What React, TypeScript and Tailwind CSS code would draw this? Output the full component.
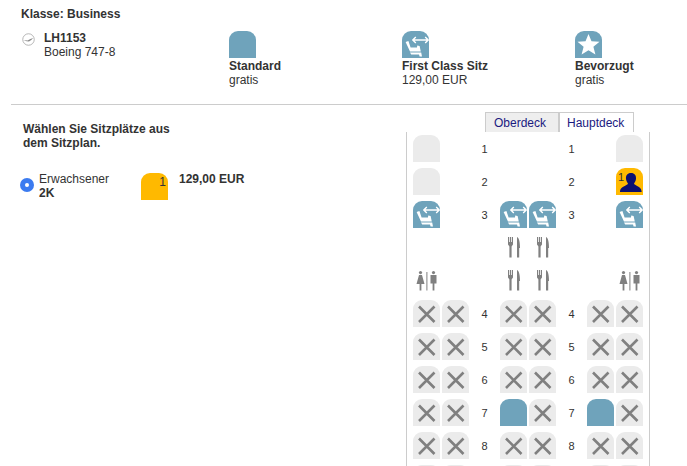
import React from "react";

type Kind = "std" | "first" | "pref" | "blocked" | "free" | "sel" | "none" | "meal" | "lav";

const firstPaths = (
  <>
    <path d="M3.6 11 L6.4 10 L8.6 16.4 L15 16.6 L15.2 14.6 L17.6 15 L18.8 20.4 L8 20.4 Z" fill="#fff" />
    <path d="M8 21.6 H19.2 L20 25.4 H17.6 L17 23.4 H9.2 Z" fill="#fff" />
    <path d="M11 9 H26 M13.8 6 L10.8 9 L13.8 12 M23.2 6 L26.2 9 L23.2 12" fill="none" stroke="#fff" strokeWidth="1.4" />
  </>
);

function Seat({ kind, label }: { kind: Kind; label?: string }) {
  if (kind === "none") return <div className="h-[27px] w-[27px]" />;
  if (kind === "meal") {
    return (
      <div className="flex h-[27px] w-[27px] items-center justify-center">
        <svg width="12" height="21" viewBox="0 0 12 21" fill="#808080">
          <path d="M0 0 H1.2 V5 H2 V0 H3 V5 H3.8 V0 H5 V7.5 L3.6 9.5 V20.5 H1.4 V9.5 L0 7.5 Z" />
          <path d="M9 0 C11.2 1 12 5 12 11 H11.2 V20.5 H9 Z" />
        </svg>
      </div>
    );
  }
  if (kind === "lav") {
    return (
      <div className="flex h-[27px] w-[27px] items-center justify-center">
        <svg width="22" height="20" viewBox="0 0 22 20" fill="#808080">
          <circle cx="4.5" cy="1.6" r="1.6" />
          <path d="M3 4 H6 L8.5 13 H5.4 V19.5 H3.6 V13 H0.5 Z" />
          <rect x="10.4" y="1" width="1" height="18.5" />
          <circle cx="17.5" cy="1.6" r="1.6" />
          <path d="M14.5 4 H20.5 V12.5 H18.4 V19.5 H16.6 V12.5 H14.5 Z" />
        </svg>
      </div>
    );
  }
  const bg =
    kind === "blocked" || kind === "free"
      ? "bg-[#ebebeb]"
      : kind === "sel"
        ? "bg-[#ffb900]"
        : "bg-[#6fa3bb]";
  return (
    <div className={`relative h-[27px] w-[27px] overflow-hidden rounded-t-[9px] ${bg}`}>
      <svg className="block" width="27" height="27" viewBox="0 0 27 27">
        {kind === "first" && firstPaths}
        {kind === "pref" && (
          <path d="M13.5 3 L16.5 10.2 L24.5 10.8 L18.4 15.8 L20.4 23.5 L13.5 19.3 L6.6 23.5 L8.6 15.8 L2.5 10.8 L10.5 10.2 Z" fill="#fff" />
        )}
        {kind === "blocked" && (
          <path d="M6 6.5 L21.5 22 M21.5 6.5 L6 22" stroke="#808080" strokeWidth="2.6" fill="none" />
        )}
        {kind === "sel" && !label && (
          <path d="M15 5 C18.6 5 20.4 7.5 20 11 C19.7 13 18.6 14.5 18 15.5 C18.2 17.5 25 18 25.6 23 L25.6 24 H4 V23 C4.8 18 11.8 17.5 12 15.5 C11.4 14.5 10.3 13 10 11 C9.6 7.5 11.4 5 15 5 Z" fill="#0b1070" />
        )}
      </svg>
      {kind === "sel" && (
        <span className={`absolute leading-[14px] text-[#333] ${label ? "right-[2px] top-[2px] text-[12px]" : "left-[2px] top-[2px] text-[11px]"}`}>1</span>
      )}
    </div>
  );
}

const B: Kind = "blocked";
const N: Kind = "none";
const rows: { kinds: Kind[]; num?: string }[] = [
  { num: "1", kinds: ["free", N, N, N, N, N, N, "free"] },
  { num: "2", kinds: ["free", N, N, N, N, N, N, "sel"] },
  { num: "3", kinds: ["first", N, N, "first", "first", N, N, "first"] },
  { kinds: [N, N, N, "meal", "meal", N, N, N] },
  { kinds: ["lav", N, N, "meal", "meal", N, N, "lav"] },
  { num: "4", kinds: [B, B, N, B, B, N, B, B] },
  { num: "5", kinds: [B, B, N, B, B, N, B, B] },
  { num: "6", kinds: [B, B, N, B, B, N, B, B] },
  { num: "7", kinds: [B, B, N, "std", B, N, "std", B] },
  { num: "8", kinds: [B, B, N, B, B, N, B, B] },
  { kinds: [B, B, N, B, B, N, B, B] },
];

function Option({ kind, name, price }: { kind: Kind; name: string; price: string }) {
  return (
    <div className="w-[173px] shrink-0">
      <Seat kind={kind} />
      <div className="mt-[1px] font-bold">{name}</div>
      <div>{price}</div>
    </div>
  );
}

export default function App() {
  return (
    <div
      className="h-[466px] w-[687px] overflow-hidden bg-white text-[12px] leading-[14px] text-[#333]"
      style={{ fontFamily: '"Liberation Sans", Arial, sans-serif' }}
    >
      <header className="ml-[11px] h-[105px] overflow-hidden border-b border-[#cccccc]">
        <div className="pl-[10px] pt-[7px] font-bold">Klasse: Business</div>
        <div className="mt-[10px] flex pl-[11px]">
          <div className="flex w-[207px] shrink-0">
            <svg className="mt-[2px] shrink-0" width="13" height="13" viewBox="0 0 14 14" fill="none">
              <circle cx="7" cy="7" r="6.2" stroke="#a8a8a8" strokeWidth="0.9" />
              <path d="M1.5 7.6 L6 8 L9 6.5 L12 5.5 L10 7.6 L7.5 9.2 L5 8.8 Z" fill="#8a8a8a" />
            </svg>
            <div className="ml-[9px]">
              <div className="font-bold">LH1153</div>
              <div>Boeing 747-8</div>
            </div>
          </div>
          <Option kind="std" name="Standard" price="gratis" />
          <Option kind="first" name="First Class Sitz" price="129,00 EUR" />
          <Option kind="pref" name="Bevorzugt" price="gratis" />
        </div>
      </header>
      <main className="flex">
        <section className="w-[406px] shrink-0 pl-[20px]">
          <h2 className="ml-[3px] mt-[17px] w-[170px] font-bold">Wählen Sie Sitzplätze aus dem Sitzplan.</h2>
          <div className="mt-[16px] flex items-start">
            <div className="mt-[12px] flex h-[14px] w-[14px] items-center justify-center rounded-full bg-[#3b7bf0]">
              <div className="h-[4px] w-[4px] rounded-full bg-white" />
            </div>
            <div className="ml-[5px] mt-[6px] w-[102px]">
              <div>Erwachsener</div>
              <div className="font-bold">2K</div>
            </div>
            <div className="mt-[7px]">
              <Seat kind="sel" label="1" />
            </div>
            <div className="ml-[11px] mt-[6px] font-bold">129,00 EUR</div>
          </div>
        </section>
        <section className="w-[244px] shrink-0">
          <div className="ml-[79px] mt-[7px] flex h-[20px] text-[#1a1a80]">
            <div className="flex h-[20px] w-[74px] items-center border border-b-0 border-[#cccccc] bg-[#eeeeee] pl-[8px]">Oberdeck</div>
            <div className="flex h-[20px] w-[75px] items-center border border-b-0 border-[#cccccc] bg-white pl-[7px]">Hauptdeck</div>
          </div>
          <div className="grid grid-cols-[repeat(8,27px)] gap-x-[2px] gap-y-[6px] border-x border-[#cccccc] pl-[6px] pt-[3px]">
            {rows.map((row, r) =>
              row.kinds.map((k, c) =>
                (c === 2 || c === 5) && row.num ? (
                  <div key={`${r}-${c}`} className="flex h-[27px] items-center justify-center text-[11px]">{row.num}</div>
                ) : (
                  <Seat key={`${r}-${c}`} kind={k} />
                ),
              ),
            )}
          </div>
        </section>
      </main>
    </div>
  );
}
